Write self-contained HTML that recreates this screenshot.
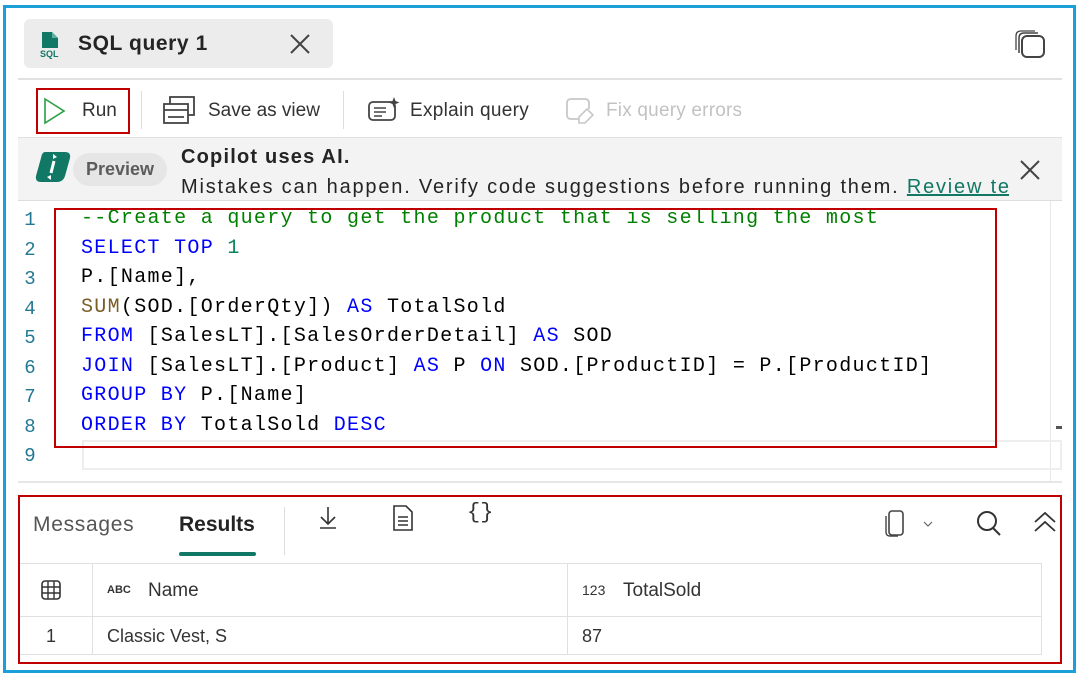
<!DOCTYPE html>
<html><head><meta charset="utf-8"><style>
*{margin:0;padding:0;box-sizing:border-box}
body{width:1079px;height:678px;background:#fff;position:relative;overflow:hidden;font-family:"Liberation Sans",sans-serif;color:#242424}
.a{position:absolute}
.code{font-family:"Liberation Mono",monospace;font-size:20px;letter-spacing:1.3px;white-space:pre;color:#000}
.ln{font-family:"Liberation Mono",monospace;font-size:19px;color:#237893;width:20px;text-align:center}
.k{color:#0000ff}.f{color:#795e26}.c{color:#008000}.n{color:#098658}
</style></head><body>
<div class="a" style="left:3px;top:5px;width:1073px;height:668px;border:3px solid #1a9fd9"></div>
<!-- tab -->
<div class="a" style="left:24px;top:19px;width:309px;height:49px;background:#ececec;border-radius:6px"></div>
<svg class="a" style="left:38px;top:30px" width="26" height="30" viewBox="0 0 26 30"><path d="M4 2h10l6 6v10H4z" fill="#117865"/><path d="M14 2v6h6" fill="#5fb09e"/><text x="2" y="27" font-size="9" font-weight="bold" fill="#117865" font-family="Liberation Sans">SQL</text></svg>
<div class="a" style="left:78px;top:32px;font-size:21px;font-weight:bold;color:#242424;letter-spacing:0.6px">SQL query 1</div>
<svg class="a" style="left:289px;top:33px" width="22" height="22"><path d="M2 2L20 20M20 2L2 20" stroke="#444" stroke-width="2"/></svg>
<svg class="a" style="left:1014px;top:29px" width="34" height="30"><rect x="8" y="7" width="22" height="21" rx="5" fill="none" stroke="#444" stroke-width="2"/><path d="M5 24V9q0-5 5-5h14" fill="none" stroke="#444" stroke-width="1.5"/><path d="M2 21V7q0-5 5-5h14" fill="none" stroke="#444" stroke-width="1.3"/></svg>
<div class="a" style="left:18px;top:78px;width:1044px;height:2px;background:#e1e1e1"></div>
<!-- toolbar -->
<div class="a" style="left:36px;top:88px;width:94px;height:46px;border:2px solid #c00000"></div>
<svg class="a" style="left:43px;top:97px" width="24" height="28"><path d="M2 2L21 14L2 26Z" fill="none" stroke="#2aa043" stroke-width="1.6"/></svg>
<div class="a" style="left:82px;top:100px;font-size:19px;color:#333">Run</div>
<div class="a" style="left:141px;top:91px;width:1px;height:38px;background:#ddd"></div>
<svg class="a" style="left:162px;top:95px" width="34" height="30"><rect x="8" y="2" width="24" height="18" fill="none" stroke="#444" stroke-width="1.8"/><rect x="2" y="9" width="24" height="19" fill="#fff" stroke="#444" stroke-width="1.8"/><path d="M2 15h24M6 22h16" stroke="#444" stroke-width="1.8"/></svg>
<div class="a" style="left:208px;top:100px;font-size:19px;color:#333">Save as view</div>
<div class="a" style="left:343px;top:91px;width:1px;height:38px;background:#ddd"></div>
<svg class="a" style="left:367px;top:96px" width="34" height="26"><rect x="2" y="6" width="26" height="18" rx="4" fill="none" stroke="#444" stroke-width="1.8"/><path d="M7 12h12M7 16h12M7 20h8" stroke="#444" stroke-width="1.6"/><path d="M27 1l1.5 4 4 1.5-4 1.5-1.5 4-1.5-4-4-1.5 4-1.5z" fill="#444"/></svg>
<div class="a" style="left:410px;top:100px;font-size:19px;color:#333;letter-spacing:0.3px">Explain query</div>
<svg class="a" style="left:565px;top:97px" width="32" height="28"><path d="M14 22H6q-4 0-4-4V6q0-4 4-4h14q4 0 4 4v6" fill="none" stroke="#c8c8c8" stroke-width="1.8"/><path d="M14 20l8-8 6 6-8 8h-6z" fill="none" stroke="#c8c8c8" stroke-width="1.6"/></svg>
<div class="a" style="left:606px;top:100px;font-size:19px;color:#c2c2c2;letter-spacing:0.2px">Fix query errors</div>
<!-- banner -->
<div class="a" style="left:18px;top:137px;width:1044px;height:64px;background:#f3f3f3;border-top:1px solid #e0e0e0;border-bottom:1px solid #ddd"></div>
<svg class="a" style="left:33px;top:150px" width="40" height="34" viewBox="0 0 40 34"><path d="M12 2h20q6 0 5 6l-5 18q-2 6-8 6H8q-6 0-5-6l5-18q1-6 4-6z" fill="#117865"/><path d="M21 11l-3 12" stroke="#fff" stroke-width="3"/><path d="M20 4l4 3-4 2z" fill="#fff"/><path d="M18 30l-4-3 4-2z" fill="#fff"/></svg>
<div class="a" style="left:73px;top:153px;width:94px;height:33px;border-radius:17px;background:#e6e6e6;font-size:18px;font-weight:bold;color:#5c5c5c;text-align:center;line-height:33px">Preview</div>
<div class="a" style="left:181px;top:146px;font-size:20px;font-weight:bold;color:#242424;letter-spacing:1.2px">Copilot uses AI.</div>
<div class="a" style="left:181px;top:176px;font-size:20px;color:#242424;white-space:nowrap;width:828px;overflow:hidden;letter-spacing:1.8px">Mistakes can happen. Verify code suggestions before running them. <span style="color:#117865;text-decoration:underline">Review terms</span></div>
<svg class="a" style="left:1019px;top:159px" width="22" height="22"><path d="M2 2L20 20M20 2L2 20" stroke="#444" stroke-width="2"/></svg>
<!-- editor -->
<div class="a" style="left:1050px;top:201px;width:1px;height:282px;background:#e8e8e8"></div>
<div class="a" style="left:1056px;top:426px;width:6px;height:3px;background:#555"></div>
<div class="a" style="left:82px;top:440px;width:980px;height:30px;border:2px solid #eee"></div>
<div class="a" style="left:18px;top:481px;width:1044px;height:2px;background:#e6e6e6"></div>
<div class="a ln" style="left:20px;top:206px;line-height:29.5px">1<br>2<br>3<br>4<br>5<br>6<br>7<br>8<br>9</div>
<div class="a code" style="left:81px;top:204px;line-height:29.5px"><span class="c">--Create a query to get the product that is selling the most</span>
<span class="k">SELECT TOP</span> <span class="n">1</span>
P.[Name],
<span class="f">SUM</span>(SOD.[OrderQty]) <span class="k">AS</span> TotalSold
<span class="k">FROM</span> [SalesLT].[SalesOrderDetail] <span class="k">AS</span> SOD
<span class="k">JOIN</span> [SalesLT].[Product] <span class="k">AS</span> P <span class="k">ON</span> SOD.[ProductID] = P.[ProductID]
<span class="k">GROUP BY</span> P.[Name]
<span class="k">ORDER BY</span> TotalSold <span class="k">DESC</span></div>
<div class="a" style="left:54px;top:208px;width:943px;height:240px;border:2.5px solid #c00000"></div>
<!-- results -->
<div class="a" style="left:33px;top:513px;font-size:21px;color:#555;letter-spacing:0.7px">Messages</div>
<div class="a" style="left:179px;top:513px;font-size:21px;font-weight:bold;color:#242424">Results</div>
<div class="a" style="left:179px;top:552px;width:77px;height:4px;border-radius:2px;background:#117865"></div>
<div class="a" style="left:284px;top:507px;width:1px;height:48px;background:#ddd"></div>
<svg class="a" style="left:316px;top:505px" width="24" height="26"><path d="M12 2v16M5 12l7 7 7-7M4 23h16" fill="none" stroke="#333" stroke-width="1.6"/></svg>
<svg class="a" style="left:391px;top:504px" width="24" height="28"><path d="M3 2h12l6 6v18H3z" fill="none" stroke="#333" stroke-width="1.6"/><path d="M7 13h10M7 17h10M7 21h10" stroke="#333" stroke-width="1.4"/></svg>
<div class="a" style="left:467px;top:500px;font-size:22px;color:#333;font-family:'Liberation Mono',monospace">{}</div>
<svg class="a" style="left:884px;top:508px" width="50" height="30"><rect x="5" y="3" width="14" height="24" rx="3" fill="none" stroke="#444" stroke-width="1.6"/><path d="M2 8v16q0 4 4 4h8" fill="none" stroke="#444" stroke-width="1.4"/><path d="M40 14l4 4 4-4" fill="none" stroke="#666" stroke-width="1.2"/></svg>
<svg class="a" style="left:974px;top:509px" width="30" height="28"><circle cx="13" cy="12" r="9" fill="none" stroke="#333" stroke-width="2"/><path d="M19 19l7 7" stroke="#333" stroke-width="2"/></svg>
<svg class="a" style="left:1032px;top:510px" width="26" height="24"><path d="M3 12l10-9 10 9M3 21l10-9 10 9" fill="none" stroke="#333" stroke-width="1.8"/></svg>
<div class="a" style="left:20px;top:563px;width:1022px;height:92px;border:1px solid #e0e0e0;border-left:none"></div>
<div class="a" style="left:20px;top:616px;width:1022px;height:1px;background:#e0e0e0"></div>
<div class="a" style="left:92px;top:563px;width:1px;height:92px;background:#e0e0e0"></div>
<div class="a" style="left:567px;top:563px;width:1px;height:92px;background:#e0e0e0"></div>
<svg class="a" style="left:41px;top:580px" width="20" height="20"><rect x="1" y="1" width="18" height="18" rx="3" fill="none" stroke="#333" stroke-width="1.6"/><path d="M1 7h18M1 13h18M7 1v18M13 1v18" stroke="#333" stroke-width="1.4"/></svg>
<div class="a" style="left:107px;top:584px;font-size:11px;font-weight:bold;color:#333">ABC</div>
<div class="a" style="left:148px;top:580px;font-size:19px;color:#333">Name</div>
<div class="a" style="left:582px;top:582px;font-size:14px;color:#333">123</div>
<div class="a" style="left:623px;top:580px;font-size:19px;color:#333">TotalSold</div>
<div class="a" style="left:46px;top:626px;font-size:18px;color:#333">1</div>
<div class="a" style="left:107px;top:626px;font-size:18px;color:#333">Classic Vest, S</div>
<div class="a" style="left:582px;top:626px;font-size:18px;color:#333">87</div>
<div class="a" style="left:18px;top:495px;width:1044px;height:169px;border:2.5px solid #c00000"></div>
</body></html>
